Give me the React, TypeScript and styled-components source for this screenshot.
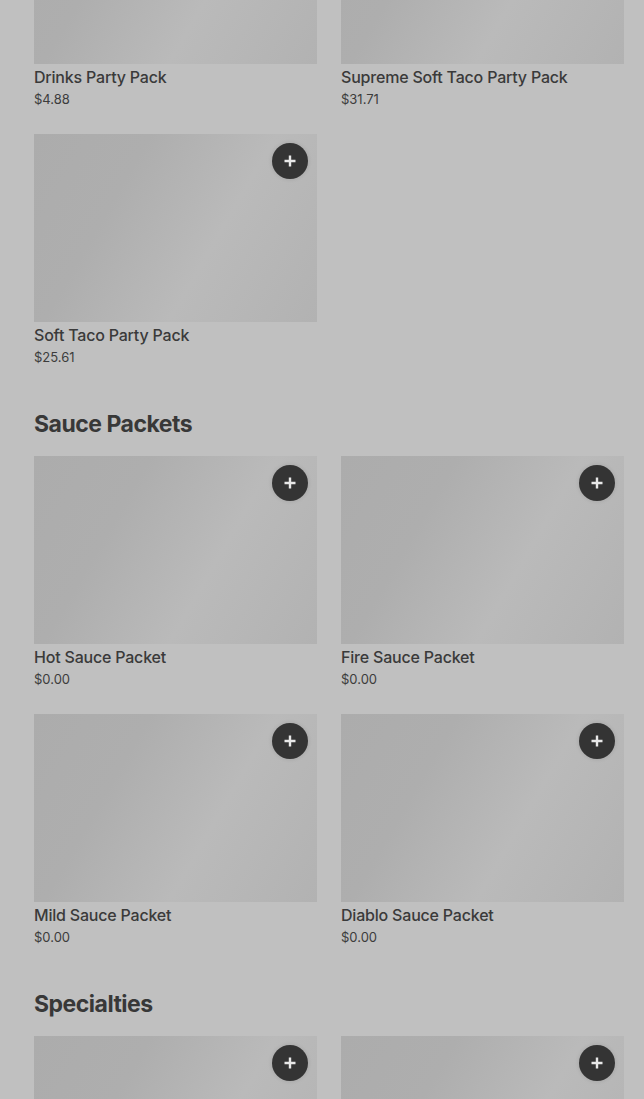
import React from "react";
import styled, { createGlobalStyle } from "styled-components";

const Global = createGlobalStyle`
  html, body { margin: 0; padding: 0; background: #c0c0c0; overflow: hidden; }
  body { font-family: "Inter", "Liberation Sans", sans-serif; color: #3a3a3a; }
`;

const Page = styled.main`
  padding: 0 20px 0 34px;
  margin-top: -212px;
`;

const Section = styled.section`
  padding-top: 40px;
`;

const Heading = styled.h2`
  margin: 0 0 16px;
  font-size: 23px;
  line-height: 32px;
  font-weight: 700;
  letter-spacing: -0.5px;
  color: #383838;
`;

const Grid = styled.div`
  display: grid;
  grid-template-columns: 283px 283px;
  column-gap: 24px;
  row-gap: 24px;
`;

const Card = styled.div`
  display: flex;
  flex-direction: column;
  padding-bottom: 1px;
`;

const Thumb = styled.div`
  position: relative;
  height: 188px;
  background: linear-gradient(120deg, #acacac 0%, #aeaeae 30%, #bababa 62%, #b2b2b2 100%);
`;

const AddButton = styled.button`
  position: absolute;
  top: 9px;
  right: 9px;
  width: 36px;
  height: 36px;
  border-radius: 50%;
  border: none;
  padding: 0;
  background: #343434;
  display: flex;
  align-items: center;
  justify-content: center;
  box-shadow: 0 0 4px rgba(0,0,0,0.12);
`;

const Name = styled.div`
  margin-top: 1px;
  font-size: 16px;
  line-height: 24px;
  font-weight: 500;
  letter-spacing: -0.2px;
  color: #3a3a3a;
`;

const Price = styled.div`
  margin-top: 1px;
  font-size: 13px;
  line-height: 19px;
  color: #3c3c3c;
`;

const Plus = () => (
  <svg width="14" height="14" viewBox="0 0 14 14">
    <path d="M7 1.5v11M1.5 7h11" stroke="#e8e8e8" strokeWidth="2.4" />
  </svg>
);

type Item = { name: string; price: string };

const ItemCard = ({ item }: { item: Item }) => (
  <Card>
    <Thumb>
      <AddButton aria-label="Add">
        <Plus />
      </AddButton>
    </Thumb>
    <Name>{item.name}</Name>
    <Price>{item.price}</Price>
  </Card>
);

const sections: { title?: string; items: Item[] }[] = [
  {
    items: [
      { name: "Drinks Party Pack", price: "$4.88" },
      { name: "Supreme Soft Taco Party Pack", price: "$31.71" },
      { name: "Soft Taco Party Pack", price: "$25.61" },
    ],
  },
  {
    title: "Sauce Packets",
    items: [
      { name: "Hot Sauce Packet", price: "$0.00" },
      { name: "Fire Sauce Packet", price: "$0.00" },
      { name: "Mild Sauce Packet", price: "$0.00" },
      { name: "Diablo Sauce Packet", price: "$0.00" },
    ],
  },
  {
    title: "Specialties",
    items: [
      { name: "Cheesy Gordita Crunch", price: "$5.49" },
      { name: "Chalupa Supreme", price: "$4.99" },
    ],
  },
];

export default function App() {
  return (
    <>
      <Global />
      <Page>
        {sections.map((s, i) => (
          <Section key={i}>
            <Heading>{s.title ?? "Party Packs"}</Heading>
            <Grid>
              {s.items.map((it) => (
                <ItemCard key={it.name} item={it} />
              ))}
            </Grid>
          </Section>
        ))}
      </Page>
    </>
  );
}
